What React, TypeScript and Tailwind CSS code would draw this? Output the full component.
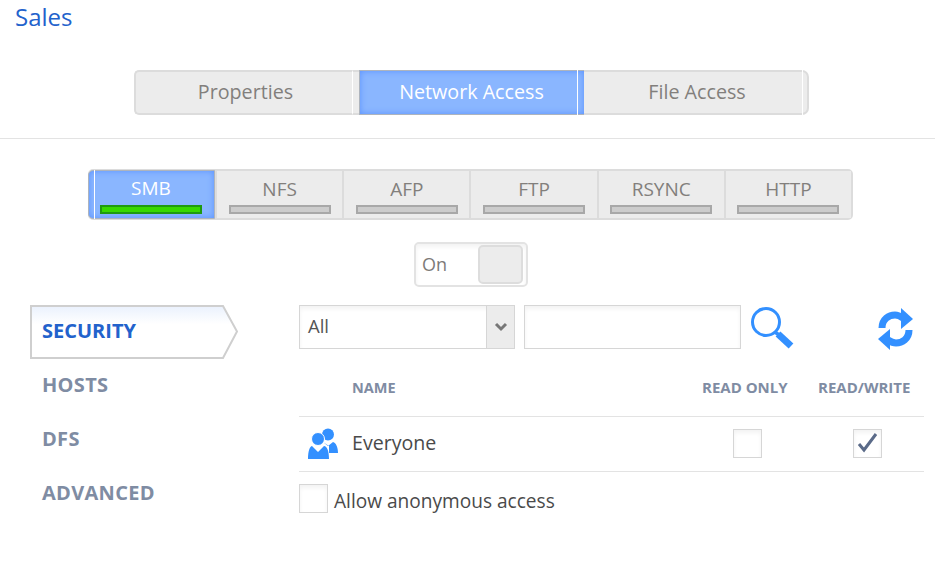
import React from 'react';

const font = 'font-["Open_Sans","Noto_Sans",sans-serif]';

const protocols = ['NFS', 'AFP', 'FTP', 'RSYNC', 'HTTP'];
const sideItems = ['HOSTS', 'DFS', 'ADVANCED'];

const App: React.FC = () => {
  return (
    <div className={`w-[935px] h-[567px] bg-white overflow-hidden ${font}`}>
      <div className="h-[70px] pl-[15px] pt-[2px] text-[24px] leading-[30px] text-[#2262cc]">Sales</div>

      {/* top tabs */}
      <div className="ml-[134px] w-[675px] h-[45px] flex text-[19.7px] relative">
        <div className="w-[218px] flex items-center justify-center pl-[3px] pb-[1px] bg-[#ececec] border-2 border-r-0 border-[#dcdcdc] rounded-l-[5px] text-[#827f7c]">
          Properties
        </div>
        <div className="w-[7px] bg-[#ececec] border-y-2 border-[#dcdcdc] border-l border-l-white"></div>
        <div className="w-[225px] flex items-center justify-center pr-[1px] pb-[1px] bg-[#8ab6ff] border-y border-l border-[#aeb4bd] shadow-[inset_0_0_6px_#5a92ff] text-white relative">
          Network Access
          <div className="absolute right-[6px] -top-px -bottom-px w-px bg-white"></div>
        </div>
        <div className="flex-1 flex items-center justify-center pl-[3px] pb-[1px] bg-[#ececec] border-2 border-l-0 border-[#dcdcdc] rounded-r-[7px] text-[#827f7c] relative">
          File Access
          <div className="absolute right-[4px] -top-[2px] -bottom-[2px] w-px bg-white"></div>
        </div>
      </div>

      <div className="mt-[23px] h-px bg-[#e3e3e3]"></div>

      {/* protocol tabs */}
      <div className="ml-[88px] mt-[30px] w-[765px] h-[51px] flex bg-[#dcdcdc] border-2 border-[#dcdcdc] rounded-[5px] text-[19px] gap-[2px]">
        <div className="w-[127px] -my-[1px] -ml-[2px] flex flex-col items-center bg-[#8ab6ff] border border-[#aeb4bd] rounded-l-[5px] shadow-[inset_0_0_6px_#5a92ff] text-white relative">
          <div className="h-[33px] leading-[33px] pt-px pr-px">SMB</div>
          <div className="w-[102px] h-[9px] mt-[1px] mr-[1px] bg-[#37d800] border-2 border-[#1f9a10]"></div>
          <div className="absolute left-[5px] -top-px -bottom-px w-px bg-white"></div>
        </div>
        {protocols.map((p) => (
          <div key={p} className="flex-1 flex flex-col items-center bg-[#ececec] text-[#827f7c]">
            <div className="h-[33px] leading-[33px] pt-[2px]">{p}</div>
            <div className="w-[102px] h-[9px] mt-[1px] bg-[#cccccc] border-2 border-[#a8a8a8]"></div>
          </div>
        ))}
      </div>

      {/* on/off switch */}
      <div className="ml-[414px] mt-[22px] w-[114px] h-[45px] flex items-center pl-[6px] pr-[3px] justify-between bg-white border-2 border-[#e3e3e3] rounded-[5px] shadow-[inset_0_3px_4px_#f3f3f3]">
        <span className="text-[18px] text-[#7d7a78]">On</span>
        <div className="w-[45px] h-[39px] bg-[#ececec] border-2 border-[#dddddd] rounded-[5px]"></div>
      </div>

      <div className="mt-[18px] flex">
        {/* side nav */}
        <div className="ml-[30px] w-[208px]">
          <div className="relative h-[54px] pl-[12px] pb-[2px] flex items-center text-[20px] font-bold text-[#2262cc]">
            <svg className="absolute left-0 top-0" width="208" height="54" viewBox="0 0 208 54">
              <defs>
                <linearGradient id="nav" x1="0" y1="0" x2="0" y2="1">
                  <stop offset="0" stopColor="#eaf1fd" />
                  <stop offset="0.35" stopColor="#ffffff" />
                </linearGradient>
              </defs>
              <path d="M1 1 H193 L207 26.5 L193 53 H1 Z" fill="url(#nav)" stroke="#cfcfcf" strokeWidth="2" />
            </svg>
            <span className="relative">SECURITY</span>
          </div>
          {sideItems.map((s) => (
            <div key={s} className="h-[54px] pl-[12px] pb-[2px] flex items-center text-[20px] tracking-[0.3px] font-bold text-[#7f8ca3]">
              {s}
            </div>
          ))}
        </div>

        <div className="ml-[61px] w-[625px]">
          {/* filter row */}
          <div className="flex items-center h-[44px]">
            <div className="w-[216px] h-[44px] flex border border-[#d6d6d6] shadow-[inset_0_3px_4px_#f3f3f3]">
              <div className="flex-1 pl-[8px] text-[18.5px] leading-[40px] text-[#555]">All</div>
              <div className="w-[28px] flex items-center justify-center bg-[#ececec] border-l border-[#d6d6d6]">
                <svg width="14" height="10" viewBox="0 0 14 10">
                  <path d="M2 2 L7 7 L12 2" fill="none" stroke="#777" strokeWidth="3" />
                </svg>
              </div>
            </div>
            <div className="ml-[9px] w-[217px] h-[44px] border border-[#d6d6d6] shadow-[inset_0_3px_4px_#f3f3f3]"></div>
            <svg className="ml-[10px]" width="44" height="44" viewBox="0 0 44 44">
              <circle cx="15" cy="17" r="13.5" fill="none" stroke="#3390ff" strokeWidth="3" />
              <path d="M24 27 L28 30" stroke="#3390ff" strokeWidth="3.5" />
              <path d="M27 29 L40 41" stroke="#3390ff" strokeWidth="7" />
            </svg>
            <svg className="ml-[83px] mt-[4px]" width="35" height="42" viewBox="0 0 35 42">
              <path d="M4 20 C4 11 11 7 17 7 C20 7 22 8 25 10" fill="none" stroke="#3390ff" strokeWidth="7" />
              <path d="M23 0 L35 11 L23 21 Z" fill="#3390ff" />
              <path d="M31 22 C31 31 24 35 18 35 C15 35 13 34 10 32" fill="none" stroke="#3390ff" strokeWidth="7" />
              <path d="M12 42 L0 31 L12 21 Z" fill="#3390ff" />
            </svg>
          </div>

          {/* table header */}
          <div className="mt-[27px] h-[23px] flex items-center text-[15px] font-bold text-[#7f8ca3]">
            <div className="ml-[53px] w-[350px] text-[14.5px]">NAME</div>
            <div className="w-[116px]">READ ONLY</div>
            <div>READ/WRITE</div>
          </div>

          <div className="mt-[17px] h-[56px] flex items-center border-y border-[#e3e3e3]">
            <svg className="ml-[8px]" width="32" height="32" viewBox="0 0 32 32">
              <circle cx="21" cy="6.5" r="6" fill="#3390ff" />
              <path d="M16 14 L21 18 L26 14 C29 15 31 19 31 25 H22 V18 Z" fill="#3390ff" />
              <circle cx="11" cy="11" r="6.5" stroke="#fff" strokeWidth="1" fill="#3390ff" />
              <path d="M5 18 L11 24 L17 18 C20 18 22 23 22 31 H1 C1 23 3 18 5 18 Z" fill="#3390ff" />
            </svg>
            <div className="ml-[13px] w-[381px] pb-[2px] text-[19.6px] text-[#4a4a4a]">Everyone</div>
            <div className="w-[29px] h-[29px] -mt-px border border-[#d6d6d6] shadow-[inset_0_3px_4px_#f3f3f3]"></div>
            <div className="ml-[91px] w-[29px] h-[29px] -mt-px border border-[#d6d6d6] shadow-[inset_0_3px_4px_#f3f3f3]">
              <svg width="27" height="27" viewBox="0 0 27 27">
                <path d="M5 14 L10 20 L22 4" fill="none" stroke="#5a6a88" strokeWidth="3" />
              </svg>
            </div>
          </div>

          <div className="mt-[12px] flex items-center h-[29px]">
            <div className="w-[29px] h-[29px] border border-[#d6d6d6] shadow-[inset_0_3px_4px_#f3f3f3]"></div>
            <span className="ml-[6px] text-[19.1px] pt-[5px] text-[#4a4a4a]">Allow anonymous access</span>
          </div>
        </div>
      </div>
    </div>
  );
};

export default App;
